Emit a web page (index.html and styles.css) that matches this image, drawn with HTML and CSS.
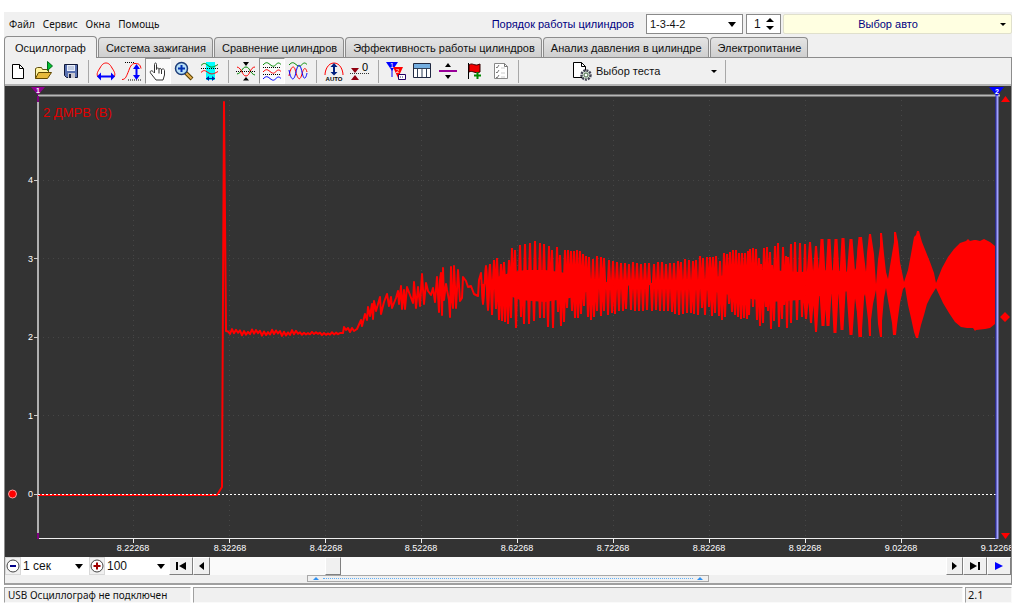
FILE: index.html
```html
<!DOCTYPE html>
<html lang="ru">
<head>
<meta charset="utf-8">
<title>USB Осциллограф</title>
<link rel="stylesheet" href="styles.css">
</head>
<body>
<main class="app">
  <header class="topbar">
    <nav class="menu">
      <button>Файл</button><button>Сервис</button><button>Окна</button><button>Помощь</button>
    </nav>
    <label class="order-label" for="order">Порядок работы цилиндров</label>
    <select class="combo order" id="order"><option>1-3-4-2</option></select>
    <span class="spin"><input type="number" value="1" aria-label="Цилиндр"><svg width="8" height="14" viewBox="0 0 8 14"><path d="M4 1 8 5H0zM4 13 0 9h8z"/></svg></span>
    <button class="auto"><span>Выбор авто</span><i class="caret"></i></button>
  </header>

  <nav class="tabs">
    <button class="tab active">Осциллограф</button>
    <button class="tab">Система зажигания</button>
    <button class="tab">Сравнение цилиндров</button>
    <button class="tab">Эффективность работы цилиндров</button>
    <button class="tab">Анализ давления в цилиндре</button>
    <button class="tab">Электропитание</button>
  </nav>

  <section class="panel">
    <div class="toolbar">
      <button class="tool" aria-label="Новый"><svg viewBox="0 0 20 20"><path d="M4.500 3.500h7l4 4v10h-11z" fill="#fff" stroke="#000"/><path d="M11.500 3.500v4h4" fill="none" stroke="#000"/></svg></button>
      <button class="tool" aria-label="Открыть"><svg viewBox="0 0 20 20"><path d="M1.500 17.500v-10l2-1h4l1 2h6v3" fill="#fff3a0" stroke="#605010"/><path d="M1.500 17.500l3-6h13l-4 6z" fill="#e6b93c" stroke="#604800"/><path d="M13.500 0.500v9l5-4.500z" fill="#00c030" stroke="#006818"/></svg></button>
      <button class="tool" aria-label="Сохранить"><svg viewBox="0 0 20 20"><path d="M4.500 3.500h13v13h-11l-2-2z" fill="#5870b0" stroke="#101838"/><path d="M7 4h8v6H7z" fill="#e8eefa"/><path d="M8 12h7v5H8z" fill="#c8c8d0"/><path d="M9 13h2v4H9z" fill="#182040"/><path d="M8 6h6M8 8h6" stroke="#9cacce"/></svg></button>
      <i class="sep"></i>
      <button class="tool" aria-label="Масштаб по времени"><svg viewBox="0 0 20 20"><path d="M2 16C0 13 2 10 4 7 6 3 8 2 10 2s4 1 6 5c2 3 4 6 2 9" fill="none" stroke="#f00"/><path d="M3 15.500h14" stroke="#00f" stroke-width="2"/><path d="M1 15.500 5 11.500v8zM19 15.500 15 11.500v8z" fill="#00f"/></svg></button>
      <button class="tool" aria-label="Масштаб по амплитуде"><svg viewBox="0 0 20 20"><path d="M0 18.500c3 0 4-2 6-7s3-9 7-9 5 1 6 5" fill="none" stroke="#f00"/><path d="M3 1.500h10M6 19h13" stroke="#000" stroke-dasharray="1 1"/><path d="M14.500 6v10" stroke="#00f" stroke-width="2"/><path d="M14.500 3 11 8h7zM14.500 19 11 14h7z" fill="#00f"/></svg></button>
      <button class="tool on" aria-label="Рука"><svg viewBox="0 0 20 20"><path d="M6.500 12V3.500c0-2 2-2 2 0V8.500c0-2 2.500-2 2.500 0 0-1.500 2.500-1.500 2.500.5 0-1.500 3-1.500 3 .5V14l-1.500 5H8L2.500 12c-1-2 1-3 2.500-1.500z" fill="#fff" stroke="#333"/><path d="M11 8.500v4M13.500 9v4" stroke="#333"/></svg></button>
      <button class="tool" aria-label="Лупа"><svg viewBox="0 0 20 20"><path d="M11 11l7 7" stroke="#584000" stroke-width="4"/><path d="M12 12l5.500 5.500" stroke="#e8b050" stroke-width="2"/><circle cx="7.500" cy="7.500" r="6" fill="#b8e0f8" stroke="#1c3c78" stroke-width="1.500"/><path d="M4 7.500h7M7.500 4v7" stroke="#0030b0" stroke-width="2"/></svg></button>
      <button class="tool" aria-label="Фрагмент"><svg viewBox="0 0 20 20"><path d="M6 1h9v18H6z" fill="#0ff"/><path d="M1 4.500C4 1.500 5 2 8 4.500s5 2 10-1" fill="none" stroke="#080"/><path d="M1 7.500h18" stroke="#000" stroke-dasharray="1 1"/><path d="M1 11.500c3-3 4-2 7 0s5 2 10-1" fill="none" stroke="#f00"/><path d="M6 17.500h9" stroke="#0028a0"/><path d="M6 17.500 9 15v5zM15 17.500 12 15v5z" fill="#0028a0"/></svg></button>
      <i class="sep"></i>
      <button class="tool" aria-label="Совместить"><svg viewBox="0 0 20 20"><path d="M1 13C6 12 6 6 10 6s4 7 9 8" fill="none" stroke="#080"/><path d="M1 6c5 1 5 9 9 9s4-9 9-9" fill="none" stroke="#f00"/><path d="M0 10.500h20" stroke="#000" stroke-dasharray="1 1"/><path d="M7 1h6l-3 4zM7 19.500h6L10 16z"/></svg></button>
      <button class="tool on" aria-label="Раздельно"><svg viewBox="0 0 20 20"><g fill="none"><path d="M1 4C4 1 5 1 8 3.500s4 2 6 0 3-2 5 0" stroke="#080"/><path d="M1 11C4 8 5 8 8 10.500s4 2 6 0 3-2 5 0" stroke="#f00"/><path d="M1 18c3-3 4-3 7-.5s4 2 6 0 3-2 5 0" stroke="#00f"/><path d="M1 6.500h18M1 13.500h18" stroke="#000" stroke-dasharray="1 1"/></g></svg></button>
      <button class="tool" aria-label="Вместе"><svg viewBox="0 0 20 20"><g fill="none"><path d="M1 4C4 1 5 1 8 3.500s4 2 6 0 3-2 5 0" stroke="#080"/><path d="M1 15C3 4 6 5 7 8c3 12 5 12 7 5 2-8 4-6 5-2" stroke="#f00"/><path d="M1 9c2 11 5 12 7 2 2-9 4-9 6 0 2 10 4 6 5 1" stroke="#00f"/></g></svg></button>
      <i class="sep"></i>
      <button class="tool" aria-label="Авто"><svg viewBox="0 0 20 20"><path d="M1 14C1 9 4 2 10 2s9 7 9 12" fill="none" stroke="#f00"/><path d="M10 5v7" stroke="#002080" stroke-width="2"/><path d="M10 2 6.500 6h7zM10 14.500 6.500 11h7z" fill="#002080"/><text x="10" y="20" font-size="6" font-weight="bold" text-anchor="middle">AUTO</text></svg></button>
      <button class="tool" aria-label="Ноль"><svg viewBox="0 0 20 20"><path d="M1 7h8l-4 5zM1 19h8l-4-5z" fill="#900010"/><path d="M0 12.500h20" stroke="#333" stroke-dasharray="1 1"/><text x="12" y="10" font-size="11">0</text></svg></button>
      <i class="sep"></i>
      <button class="tool" aria-label="Маркеры"><svg viewBox="0 0 20 20"><path d="M0 1h12L6 10z" fill="#00f"/><path d="M7 6h10l-5 11z" fill="#f00"/><path d="M6 8v8" stroke="#00f"/><text x="4" y="7" font-size="7" fill="#fff">1</text><text x="10" y="12" font-size="6" fill="#fff">2</text><path d="M12.500 13.500h7v5h-7z" fill="#fff" stroke="#206"/><path d="M14 16h4" stroke="#336" stroke-dasharray="1 1"/></svg></button>
      <button class="tool" aria-label="Таблица"><svg viewBox="0 0 20 20"><path d="M1.500 2.500h17v14h-17z" fill="#fff" stroke="#202840"/><path d="M2 3h16v4H2z" fill="#74aee0"/><path d="M2 7.500h16M5.500 7v9M10 7v9M14.500 7v9" stroke="#304058"/></svg></button>
      <button class="tool" aria-label="Линия уровня"><svg viewBox="0 0 20 20"><path d="M1 10h18" stroke="#909" stroke-width="2"/><path d="M7 6h6l-3-4zM7 14h6l-3 4z"/></svg></button>
      <button class="tool" aria-label="Флаг"><svg viewBox="0 0 20 20"><path d="M4.500 2v16" stroke="#000"/><path d="M5 4c4-3 5 2 11-1v8c-6 2-7-2-11 0z" fill="#f00000" stroke="#300"/><path d="M13.500 11v7M10 14.500h7" stroke="#080" stroke-width="2"/></svg></button>
      <button class="tool" aria-label="Список"><svg viewBox="0 0 20 20"><path d="M4.500 2.500h10l3 3v12h-13z" fill="#fff" stroke="#888"/><path d="M14.500 2.500v3h3M6 6l1 1 2-3M6 11l1 1 2-3M6 16l1 1 2-3" fill="none" stroke="#777"/><path d="M11 7h4M11 12h4M11 16h4" stroke="#ccc"/></svg></button>
      <i class="sep"></i>
      <button class="test"><svg width="20" height="20" viewBox="0 0 20 20"><path d="M1.500 1.500h8l4 4v11h-12z" fill="#fff" stroke="#000"/><path d="M9.500 1.500v4h4" fill="none" stroke="#000"/><circle cx="14" cy="14" r="4.500" fill="#d8e8d8" stroke="#445" stroke-width="2.500" stroke-dasharray="2 1"/><circle cx="14" cy="14" r="2" fill="#fff" stroke="#486848"/></svg><span>Выбор теста</span><i class="caret"></i></button>
      <i class="sep"></i>
    </div>

    <svg class="chart" viewBox="5 86 1006 471" role="img" aria-label="ДМРВ">
      <g class="grid">
        <path d="M133.500 100V538M229.500 100V538M325.500 100V538M421.500 100V538M517.500 100V538M613.500 100V538M709.500 100V538M805.500 100V538M901.500 100V538M38 180.500H996M38 258.500H996M38 337.500H996M38 415.500H996"/>
      </g>
      <path d="M38 95.500H1000" stroke="#b8b8b8" stroke-width="2"/>
      <path d="M38 101V534" stroke="#b0b0b0" stroke-width="2"/>
      <path d="M38 538.500H997M133.500 539v4M229.500 539v4M325.500 539v4M421.500 539v4M517.500 539v4M613.500 539v4M709.500 539v4M805.500 539v4M901.500 539v4" stroke="#eee" fill="none"/>
      <path d="M34 180.500h4M34 258.500h4M34 337.500h4M34 415.500h4M34 494.500h4" stroke="#ccc"/>
      <path d="M38 96v6M38 533v6" stroke="#800080" stroke-width="2"/>
      <path d="M31 87h14l-7 8z" fill="#900090"/>
      <g id="wave" class="wave"></g>
      <path d="M38 494.500H996" stroke="#fff" stroke-dasharray="2 2"/>
      <path d="M996 90V539" stroke="#2828d8"/><path d="M997.500 95V539" stroke="#a0a0ff" stroke-width="2"/>
      <path d="M989 87h15l-7 9z" fill="#00f"/>
      <path d="M1001 102h9l-4.500-6zM1001 533h9l-4.500 6zM1005 312l5 5-5 5-5-5z" fill="#f00"/>
      <circle cx="12.500" cy="494" r="4" fill="#f00" stroke="#ff9c9c"/>
      <g class="flags"><text x="38" y="93">1</text><text x="997" y="94">2</text></g>
      <text class="channel" x="43" y="117">2 ДМРВ (В)</text>
      <g class="ylabels"><text x="33" y="183">4</text><text x="33" y="262">3</text><text x="33" y="340">2</text><text x="33" y="419">1</text><text x="33" y="497">0</text></g>
      <g class="xlabels"><text x="133" y="551">8.22268</text><text x="230" y="551">8.32268</text><text x="326" y="551">8.42268</text><text x="421" y="551">8.52268</text><text x="517" y="551">8.62268</text><text x="613" y="551">8.72268</text><text x="709" y="551">8.82268</text><text x="805" y="551">8.92268</text><text x="901" y="551">9.02268</text><text x="997" y="551">9.12268</text></g>
    </svg>

    <div class="controls">
      <button class="round" aria-label="Уменьшить"><svg width="14" height="14" viewBox="0 0 14 14"><circle cx="7" cy="7" r="6" fill="#fff" stroke="#444"/><path d="M4 7h6" stroke="#008" stroke-width="2"/></svg></button>
      <select class="combo flat" aria-label="Развёртка"><option>1 сек</option></select>
      <button class="round" aria-label="Увеличить"><svg width="14" height="14" viewBox="0 0 14 14"><circle cx="7" cy="7" r="6" fill="#fff" stroke="#444"/><path d="M3.500 7h7M7 3.500v7" stroke="#a00000" stroke-width="2"/></svg></button>
      <select class="combo flat scale" aria-label="Масштаб"><option>100</option></select>
      <button class="nav wide" aria-label="В начало"><svg width="12" height="8" viewBox="0 0 12 8"><path d="M1 0h2v8H1zM11 0v8L4 4z"/></svg></button>
      <button class="nav" aria-label="Назад"><svg width="5" height="8" viewBox="0 0 5 8"><path d="M5 0v8L0 4z"/></svg></button>
      <input class="scroll" type="range" min="0" max="100" value="16" aria-label="Позиция">
      <button class="nav" aria-label="Вперёд"><svg width="5" height="8" viewBox="0 0 5 8"><path d="M0 0v8l5-4z"/></svg></button>
      <button class="nav wide" aria-label="В конец"><svg width="12" height="8" viewBox="0 0 12 8"><path d="M9 0h2v8H9zM1 0v8l7-4z"/></svg></button>
      <button class="nav wide" aria-label="Пуск"><svg width="8" height="8" viewBox="0 0 8 8"><path d="M0 0v8l8-4z" fill="#00f"/></svg></button>
    </div>
    <div class="splitter"><button class="grip" aria-label="Развернуть панель"><i></i><b></b><i></i></button></div>
  </section>

  <footer class="status"><span class="state">USB Осциллограф не подключен</span><span class="message"></span><span class="version">2.1</span></footer>
</main>
<script src="wave.js"></script>
</body>
</html>
```
FILE: styles.css
```css
* { box-sizing: border-box; }
body { margin: 0; padding: 12px 12px 0 4px; background: #fff; color: #111; font: 11px/14px "Liberation Sans", Arial, sans-serif; }
button, select, input { font: inherit; color: inherit; margin: 0; padding: 0; border: 0; background: none; border-radius: 0; }
svg { display: block; }
.app { display: flex; flex-direction: column; background: #f0f0f0; }

.topbar { display: flex; align-items: center; height: 24px; }
.menu { display: flex; gap: 8px; padding-left: 5px; flex: 1; font: 10px/14px "Noto Sans", sans-serif; }
.order-label { color: #000080; margin-right: 12px; }
.combo { appearance: none; height: 20px; padding: 0 3px; background: #fff url("data:image/svg+xml,%3Csvg xmlns='http://www.w3.org/2000/svg' width='8' height='5'%3E%3Cpath d='M0 0h8L4 5z'/%3E%3C/svg%3E") no-repeat right 6px center; }
.order { width: 97px; border: 1px solid #8a8a8a; }
.spin { display: flex; align-items: center; width: 35px; height: 20px; margin: 0 2px 0 3px; padding-right: 6px; border: 1px solid #8a8a8a; background: #fff; }
.spin input { appearance: textfield; flex: 1; min-width: 0; padding-left: 7px; font-size: 12px; }
.spin input::-webkit-inner-spin-button { appearance: none; margin: 0; }
.spin svg { flex: none; }
.auto { display: flex; align-items: center; width: 229px; height: 20px; padding-right: 5px; border: 1px solid #e0e0cc; border-radius: 2px; background: #ffffe1; color: #000080; }
.auto span { flex: 1; padding-left: 4px; padding-right: 12px; }
.caret { border: 3px solid transparent; border-top-color: #000; border-bottom: 0; }

.tabs { display: flex; align-items: flex-end; gap: 1px; height: 21px; }
.tab { height: 20px; padding: 0 6px 0 7px; white-space: nowrap; border: 1px solid #8c8c8c; border-bottom: 0; border-radius: 4px 4px 0 0; background: linear-gradient(#e4e4e4, #cfcfcf); }
.tab.active { height: 22px; padding: 0 10px; margin-bottom: -1px; background: #f0f0f0; z-index: 1; }

.panel { border: 1px solid #8c8c8c; border-bottom: 2px solid #a0a0a0; }
.toolbar { display: flex; align-items: center; height: 28px; border-bottom: 2px solid #b4b4b4; }
.tool { display: grid; place-items: center; width: 26px; height: 26px; }
.tool svg { width: 20px; height: 20px; font-family: "Liberation Sans", sans-serif; }
.tool.on { background: #fafafa; border: 1px solid #fff; border-top-color: #909090; border-left-color: #909090; }
.sep { width: 10px; height: 23px; background: linear-gradient(#a8a8a8, #a8a8a8) no-repeat center / 1px 100%; }
.test { display: flex; align-items: center; gap: 4px; width: 197px; padding: 0 3px 0 49px; }
.test span { flex: 1; text-align: left; }

.chart { width: 100%; height: auto; background: #333; overflow: hidden; font-family: "Liberation Sans", Arial, sans-serif; }
.grid { stroke: #464646; stroke-dasharray: 1 4; }
.wave { fill: #f00; stroke: none; }
.wave .trace { fill: none; stroke: #f00; stroke-width: 2; stroke-linejoin: round; }
.flags { fill: #fff; font-size: 7px; font-weight: bold; text-anchor: middle; }
.channel { fill: #e00000; font-size: 13px; }
.ylabels { fill: #fff; font-size: 9px; text-anchor: end; }
.xlabels { fill: #fff; font-size: 9px; text-anchor: middle; }

.controls { display: flex; height: 18px; background: #fafafa; }
.round { width: 16px; display: grid; place-items: center; border: 1px solid #d8d8d8; background: #f0f0f0; }
.flat { width: 68px; height: 18px; padding: 0 2px; font-size: 12px; background-color: #fff; }
.flat.scale { width: 64px; background-position: right 4px center; }
.nav { display: grid; place-items: center; width: 17px; border: 1px solid #fff; border-right-color: #808080; border-bottom-color: #808080; background: #f0f0f0; }
.nav.wide { width: 24px; }
.scroll { appearance: none; flex: 1; min-width: 0; height: 18px; }
.scroll::-webkit-slider-thumb { appearance: none; width: 16px; height: 18px; border: 1px solid #fff; border-right-color: #808080; border-bottom-color: #808080; background: #f0f0f0; }
.splitter { display: flex; justify-content: center; height: 8px; }
.grip { display: flex; align-items: center; gap: 4px; width: 40%; height: 7px; padding: 0 5px; border: 1px solid #a8a8a8; }
.grip i { border: 3px solid transparent; border-bottom-color: #3090f0; border-top: 0; }
.grip b { flex: 1; border-top: 1px dotted #60b0f8; }

.status { display: flex; gap: 2px; padding-top: 2px; background: #fff; font: 10px/14px "Noto Sans", sans-serif; }
.status span { height: 16px; border: 1px solid #fafafa; border-top-color: #a0a0a0; border-left-color: #a0a0a0; background: #f0f0f0; white-space: nowrap; }
.state { width: 187px; padding-left: 3px; }
.message { flex: 1; }
.version { width: 47px; padding-left: 2px; font-size: 11px; }
```
FILE: wave.js
```js
const NS = 'http://www.w3.org/2000/svg';
const wave = document.getElementById('wave');

function add(d, cls) {
  const p = document.createElementNS(NS, 'path');
  p.setAttribute('d', d);
  if (cls) p.setAttribute('class', cls);
  wave.appendChild(p);
}

// Quiet part: zero line, start-up spike, idle level, first growth.
let trace = 'M38 495H217L222 487L224 102L226 331';
for (let x = 228, i = 0; x < 342; x += 2, i++) {
  const swing = x < 300 ? 3 : 1.5;
  trace += `L${x} ${332 + (x - 226) / 60 + (i % 2 ? swing : -swing) * ((i * 7 % 5) + 1) / 5}`;
}
const growth = '343,333 344,327 346,330 348,328 350,332 352,328 354,331 357,329 361,320 362,326 365,314 367,320 368,307 370,316 372,304 373,319 374,301 376,311 378,304 380,297 381,314 384,302 387,294 389,306 391,297 392,308 396,298 398,291 399,304 401,286 402,309 404,290 405,309 407,287 410,295 413,303 414,282 416,308 418,287 420,306 422,274 424,304 426,283 428,291 431,295 433,288 435,302 437,277 439,312 440,280 441,273 442,315 443,268 444,300 446,284 447,290 449,300 450,317 451,267 452,300 453,308 454,266 456,308 458,270 460,301 462,298 463,277 466,281 468,287 471,286 474,294 478,296 479,280 481,273 483,304 486,266 488,310 490,264';
add(trace + 'L' + growth.replace(/ /g, 'L'), 'trace');

// Dense part: peaks above and below the mean level, as x:y.
const tops = '486:266 490:264 494:260 497:258 501:264 504:262 509:260 512:248 515:250 520:245 525:244 530:243 535:241 540:243 544:244 549:246 552:250 557:247 560:255 565:250 568:250 571:251 574:251 577:250 580:251 583:254 586:256 589:257 593:259 597:256 601:257 604:258 609:260 613:261 617:262 621:263 625:263 629:264 633:262 637:263 641:264 645:263 649:263 654:264 658:262 662:262 666:264 670:263 674:263 678:261 681:262 685:259 689:260 693:261 696:260 700:256 703:258 707:257 710:257 713:257 716:256 720:261 724:253 727:254 730:252 733:250 736:250 739:253 742:253 745:253 748:251 750:249 753:248 756:249 759:258 761:264 764:248 767:247 770:252 772:265 775:246 778:243 783:247 786:256 788:257 791:244 795:242 800:243 805:244 810:242 816:246 822:239 829:239 836:239 843:238 851:239 860:237';
const bottoms = '483:304 488:310 492:315 496:309 499:320 502:321 505:322 508:324 511:318 516:328 521:317 524:324 529:324 534:321 540:318 544:318 548:327 553:328 558:312 561:326 564:322 567:308 572:311 575:318 578:318 581:314 584:306 588:317 591:320 594:317 597:311 601:316 604:311 608:315 612:313 615:314 619:311 623:311 626:309 631:310 635:311 639:311 643:311 647:310 652:311 656:310 660:311 664:311 668:311 672:312 675:314 679:315 683:314 687:313 691:313 694:314 698:315 702:308 705:315 709:307 712:316 715:313 719:316 722:320 725:317 729:304 732:312 735:315 738:317 741:319 744:318 747:319 749:315 753:307 757:320 760:326 763:323 766:307 768:311 771:329 774:321 776:300 779:327 782:319 784:305 787:328 791:323 797:320 802:317 806:319 811:323 816:332 823:326 828:326 835:333 842:330 851:335 860:337';
function wedges(list) {
  return list.split(' ').map(pair => {
    const [x, y] = pair.split(':').map(Number);
    const tip = x > 820 ? 1.5 : 1;
    const foot = x > 845 ? 5 : x > 805 ? 4 : 2.2;
    return `M${x - foot} 284L${x - tip} ${y}H${x + tip}L${x + foot} 284Z`;
  }).join('');
}
add(wedges(tops) + wedges(bottoms));

// Filled core of the dense part.
add('M486 282L500 276L512 272L525 270L545 270L560 272L580 276L605 282L640 283L680 283L710 278L740 272L770 270L800 272L830 270L850 272L864 276V290L840 292L820 296L800 300L770 302L740 297L710 291L680 285L640 285L600 287L570 298L545 302L520 300L500 292Z');

// Slow beats at the end of the record.
add('M852 276L856 268L858 242L860 237H862L864 256L866 272L867 253L869 234H871L874 254L876 284L878 260L880 246L880 233H882L884 254L886 272L888 279L890 266L894 242L894 232H896L898 242L900 262L904 282L908 270L911 254L914 237L916 235L917 231H919L920 235L922 242L926 252L930 262L934 273L936 283L942 268L948 257L954 249L960 243L966 241L968 239L970 241L974 240H976L980 241L984 239L990 242L995 246V324L990 328L985 329L976 330L975 331L973 328L967 328L961 327L955 322L949 313L943 303L936 288L931 296L927 304L924 315L921 325L918 338H916L914 332L911 318L908 305L905 287L903 289L900 303L897 325L896 335H893L892 323L888 300L886 288L884 298L882 321L882 337H880L878 324L876 290L873 304L871 320V336H869L868 320L865 294L862 301V337H859L858 318L854 292Z');
```
